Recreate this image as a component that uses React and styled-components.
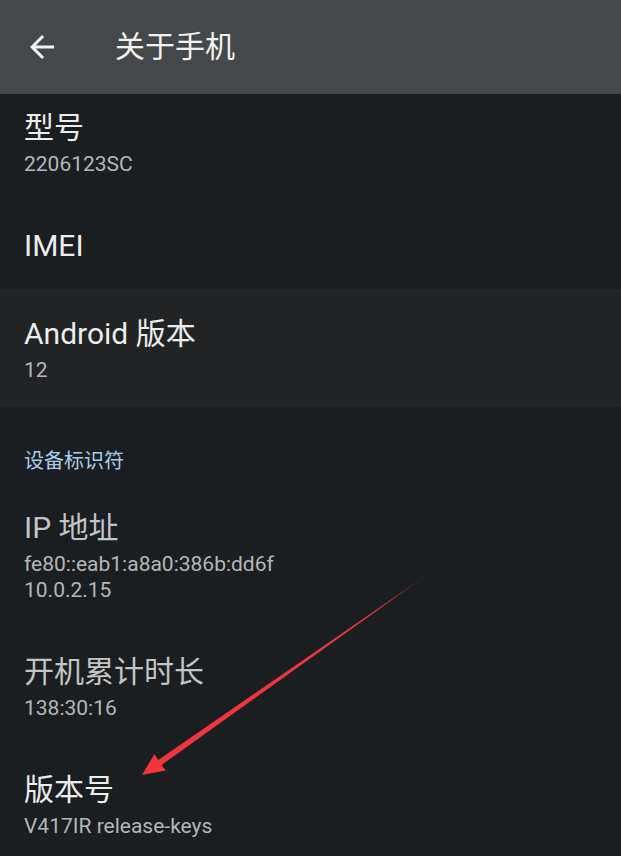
import React from "react";
import styled, { createGlobalStyle } from "styled-components";

const GlobalStyle = createGlobalStyle`
  html, body {
    margin: 0;
    padding: 0;
    background: #1b1e21;
  }
  body {
    font-family: Roboto, "Noto Sans CJK SC", sans-serif;
  }
`;

const Screen = styled.div`
  position: relative;
  width: 621px;
  height: 856px;
  overflow: hidden;
  background: #1b1e21;
`;

const Toolbar = styled.header`
  position: relative;
  z-index: 2;
  height: 94px;
  display: flex;
  align-items: center;
  background: #45484b;
  color: #f2f2f2;
`;

const BackButton = styled.button`
  display: flex;
  align-items: center;
  justify-content: center;
  margin-left: 24px;
  padding: 0;
  width: 36px;
  height: 36px;
  border: none;
  background: none;
  color: #f2f2f2;
`;

const ToolbarTitle = styled.h1`
  margin: 0 0 0 55px;
  font-size: 30px;
  font-weight: 400;
  line-height: 36px;
`;

const List = styled.div`
  margin-top: -11px;
`;

const Row = styled.div`
  padding: 26px 24px 24px;
  background: ${ ( p ) => ( p.highlight ? "#212325" : "transparent" ) };
`;

const Title = styled.div`
  font-size: 30px;
  line-height: 38px;
  color: ${ ( p ) => ( p.dim ? "#c2c4c6" : "#eceded" ) };
`;

const Summary = styled.div`
  margin-top: 4px;
  font-size: 21px;
  line-height: 26px;
  color: #b4b6b9;
  white-space: pre-line;
`;

const Category = styled.div`
  padding: 41px 24px 9px;
  font-size: 20px;
  line-height: 26px;
  color: #a9cde8;
`;

const Annotation = styled.svg`
  position: absolute;
  left: 0;
  top: 0;
  pointer-events: none;
  z-index: 3;
`;

const rows = [
  { title: "型号", summary: "2206123SC" },
  { title: "IMEI" },
  { title: "Android 版本", summary: "12", highlight: true },
  { category: "设备标识符" },
  { title: "IP 地址", summary: "fe80::eab1:a8a0:386b:dd6f\n10.0.2.15", dim: true },
  { title: "开机累计时长", summary: "138:30:16", dim: true },
  { title: "版本号", summary: "V417IR release-keys" },
];

function App () {
  return (
    <Screen>
      <GlobalStyle />
      <Toolbar>
        <BackButton aria-label="back">
          <svg width="36" height="36" viewBox="0 0 24 24" fill="currentColor">
            <path d="M20 11H7.83l5.59-5.59L12 4l-8 8 8 8 1.41-1.41L7.83 13H20v-2z" />
          </svg>
        </BackButton>
        <ToolbarTitle>关于手机</ToolbarTitle>
      </Toolbar>
      <List>
        { rows.map( ( r ) =>
          r.category ? (
            <Category key={ r.category }>{ r.category }</Category>
          ) : (
            <Row key={ r.title } highlight={ r.highlight }>
              <Title dim={ r.dim }>{ r.title }</Title>
              { r.summary && <Summary>{ r.summary }</Summary> }
            </Row>
          )
        ) }
      </List>
      <Annotation width="621" height="856" viewBox="0 0 621 856">
        <defs>
          <linearGradient id="fade" x1="426" y1="576" x2="142" y2="775" gradientUnits="userSpaceOnUse">
            <stop offset="0" stopColor="#d8343b" stopOpacity="0.5" />
            <stop offset="0.12" stopColor="#ec343b" stopOpacity="1" />
            <stop offset="1" stopColor="#f0363d" />
          </linearGradient>
        </defs>
        <polygon
          points="426,575.5 158.3,759.9 154.3,754.2 142,775 165.8,770.6 161.7,764.9"
          fill="url(#fade)"
        />
      </Annotation>
    </Screen>
  );
}

export default App;
